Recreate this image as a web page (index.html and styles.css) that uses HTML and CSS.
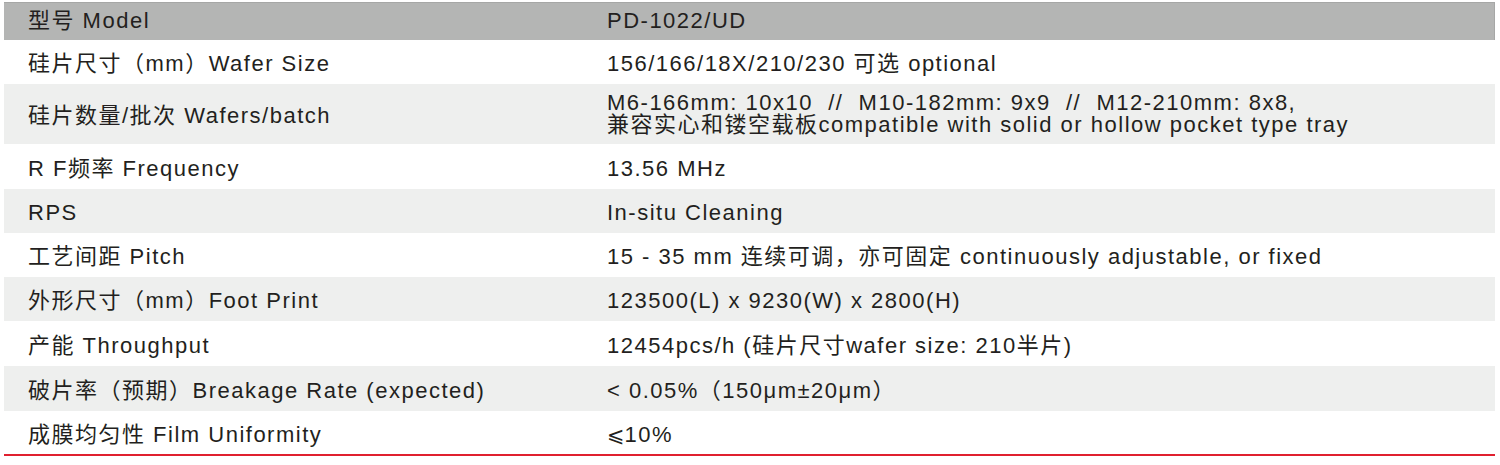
FILE: index.html
```html
<!DOCTYPE html>
<html lang="zh-CN">
<head>
<meta charset="utf-8">
<title>PD-1022/UD</title>
<link rel="stylesheet" href="styles.css">
</head>
<body>
<div class="spec">
  <div class="row head h38"><div class="k">型号 Model</div><div class="v">PD-1022/UD</div></div>
  <div class="row h44"><div class="k">硅片尺寸（mm）Wafer Size</div><div class="v">156/166/18X/210/230 可选 optional</div></div>
  <div class="row alt h60 two"><div class="k">硅片数量/批次 Wafers/batch</div><div class="v">M6-166mm: 10x10&nbsp; //&nbsp; M10-182mm: 9x9&nbsp; //&nbsp; M12-210mm: 8x8,<br>兼容实心和镂空载板compatible with solid or hollow pocket type tray</div></div>
  <div class="row h45"><div class="k">R F频率 Frequency</div><div class="v">13.56 MHz</div></div>
  <div class="row alt h44"><div class="k">RPS</div><div class="v">In-situ Cleaning</div></div>
  <div class="row h44"><div class="k">工艺间距 Pitch</div><div class="v">15 - 35 mm 连续可调，亦可固定 continuously adjustable, or fixed</div></div>
  <div class="row alt h44"><div class="k">外形尺寸（mm）Foot Print</div><div class="v">123500(L) x 9230(W) x 2800(H)</div></div>
  <div class="row h45"><div class="k">产能 Throughput</div><div class="v">12454pcs/h (硅片尺寸wafer size: 210半片)</div></div>
  <div class="row alt h45"><div class="k">破片率（预期）Breakage Rate (expected)</div><div class="v">&lt; 0.05%（150μm±20μm）</div></div>
  <div class="row h43"><div class="k">成膜均匀性 Film Uniformity</div><div class="v"><span class="sym">⩽</span>10%</div></div>
</div>
</body>
</html>
```

FILE: styles.css
```css
html, body {
  margin: 0;
  padding: 0;
  background: #ffffff;
}

.spec {
  margin: 2px 0 0 4px;
  width: 1491px;
  font-family: "Liberation Sans", "Noto Sans CJK SC", "DejaVu Sans", sans-serif;
  font-size: 22px;
  line-height: 22px;
  letter-spacing: 1.5px;
  color: #231f20;
  border-bottom: 2px solid #e0202f;
}

.row {
  display: flex;
  align-items: center;
  box-sizing: border-box;
  background: #ffffff;
}

.row.alt {
  background: #eeefee;
}

.row.head {
  background: #b4b5b4;
  border-top: 1px solid #a6a7a6;
  border-right: 1px solid #a6a7a6;
}

.h38 { height: 38px; }
.h43 { height: 43px; }
.h44 { height: 44px; }
.h45 { height: 45px; }
.h60 { height: 60px; }

.k {
  width: 579px;
  flex: none;
  box-sizing: border-box;
  padding-left: 24px;
  padding-top: 4px;
  white-space: nowrap;
}

.v {
  flex: 1;
  padding-left: 24px;
  padding-top: 4px;
  white-space: nowrap;
}

.head .k, .head .v {
  padding-top: 0;
  padding-bottom: 1px;
}

.two .v {
  padding-top: 0;
}

.sym {
  font-family: "DejaVu Sans", sans-serif;
  font-size: 21px;
  letter-spacing: 0;
}
```
